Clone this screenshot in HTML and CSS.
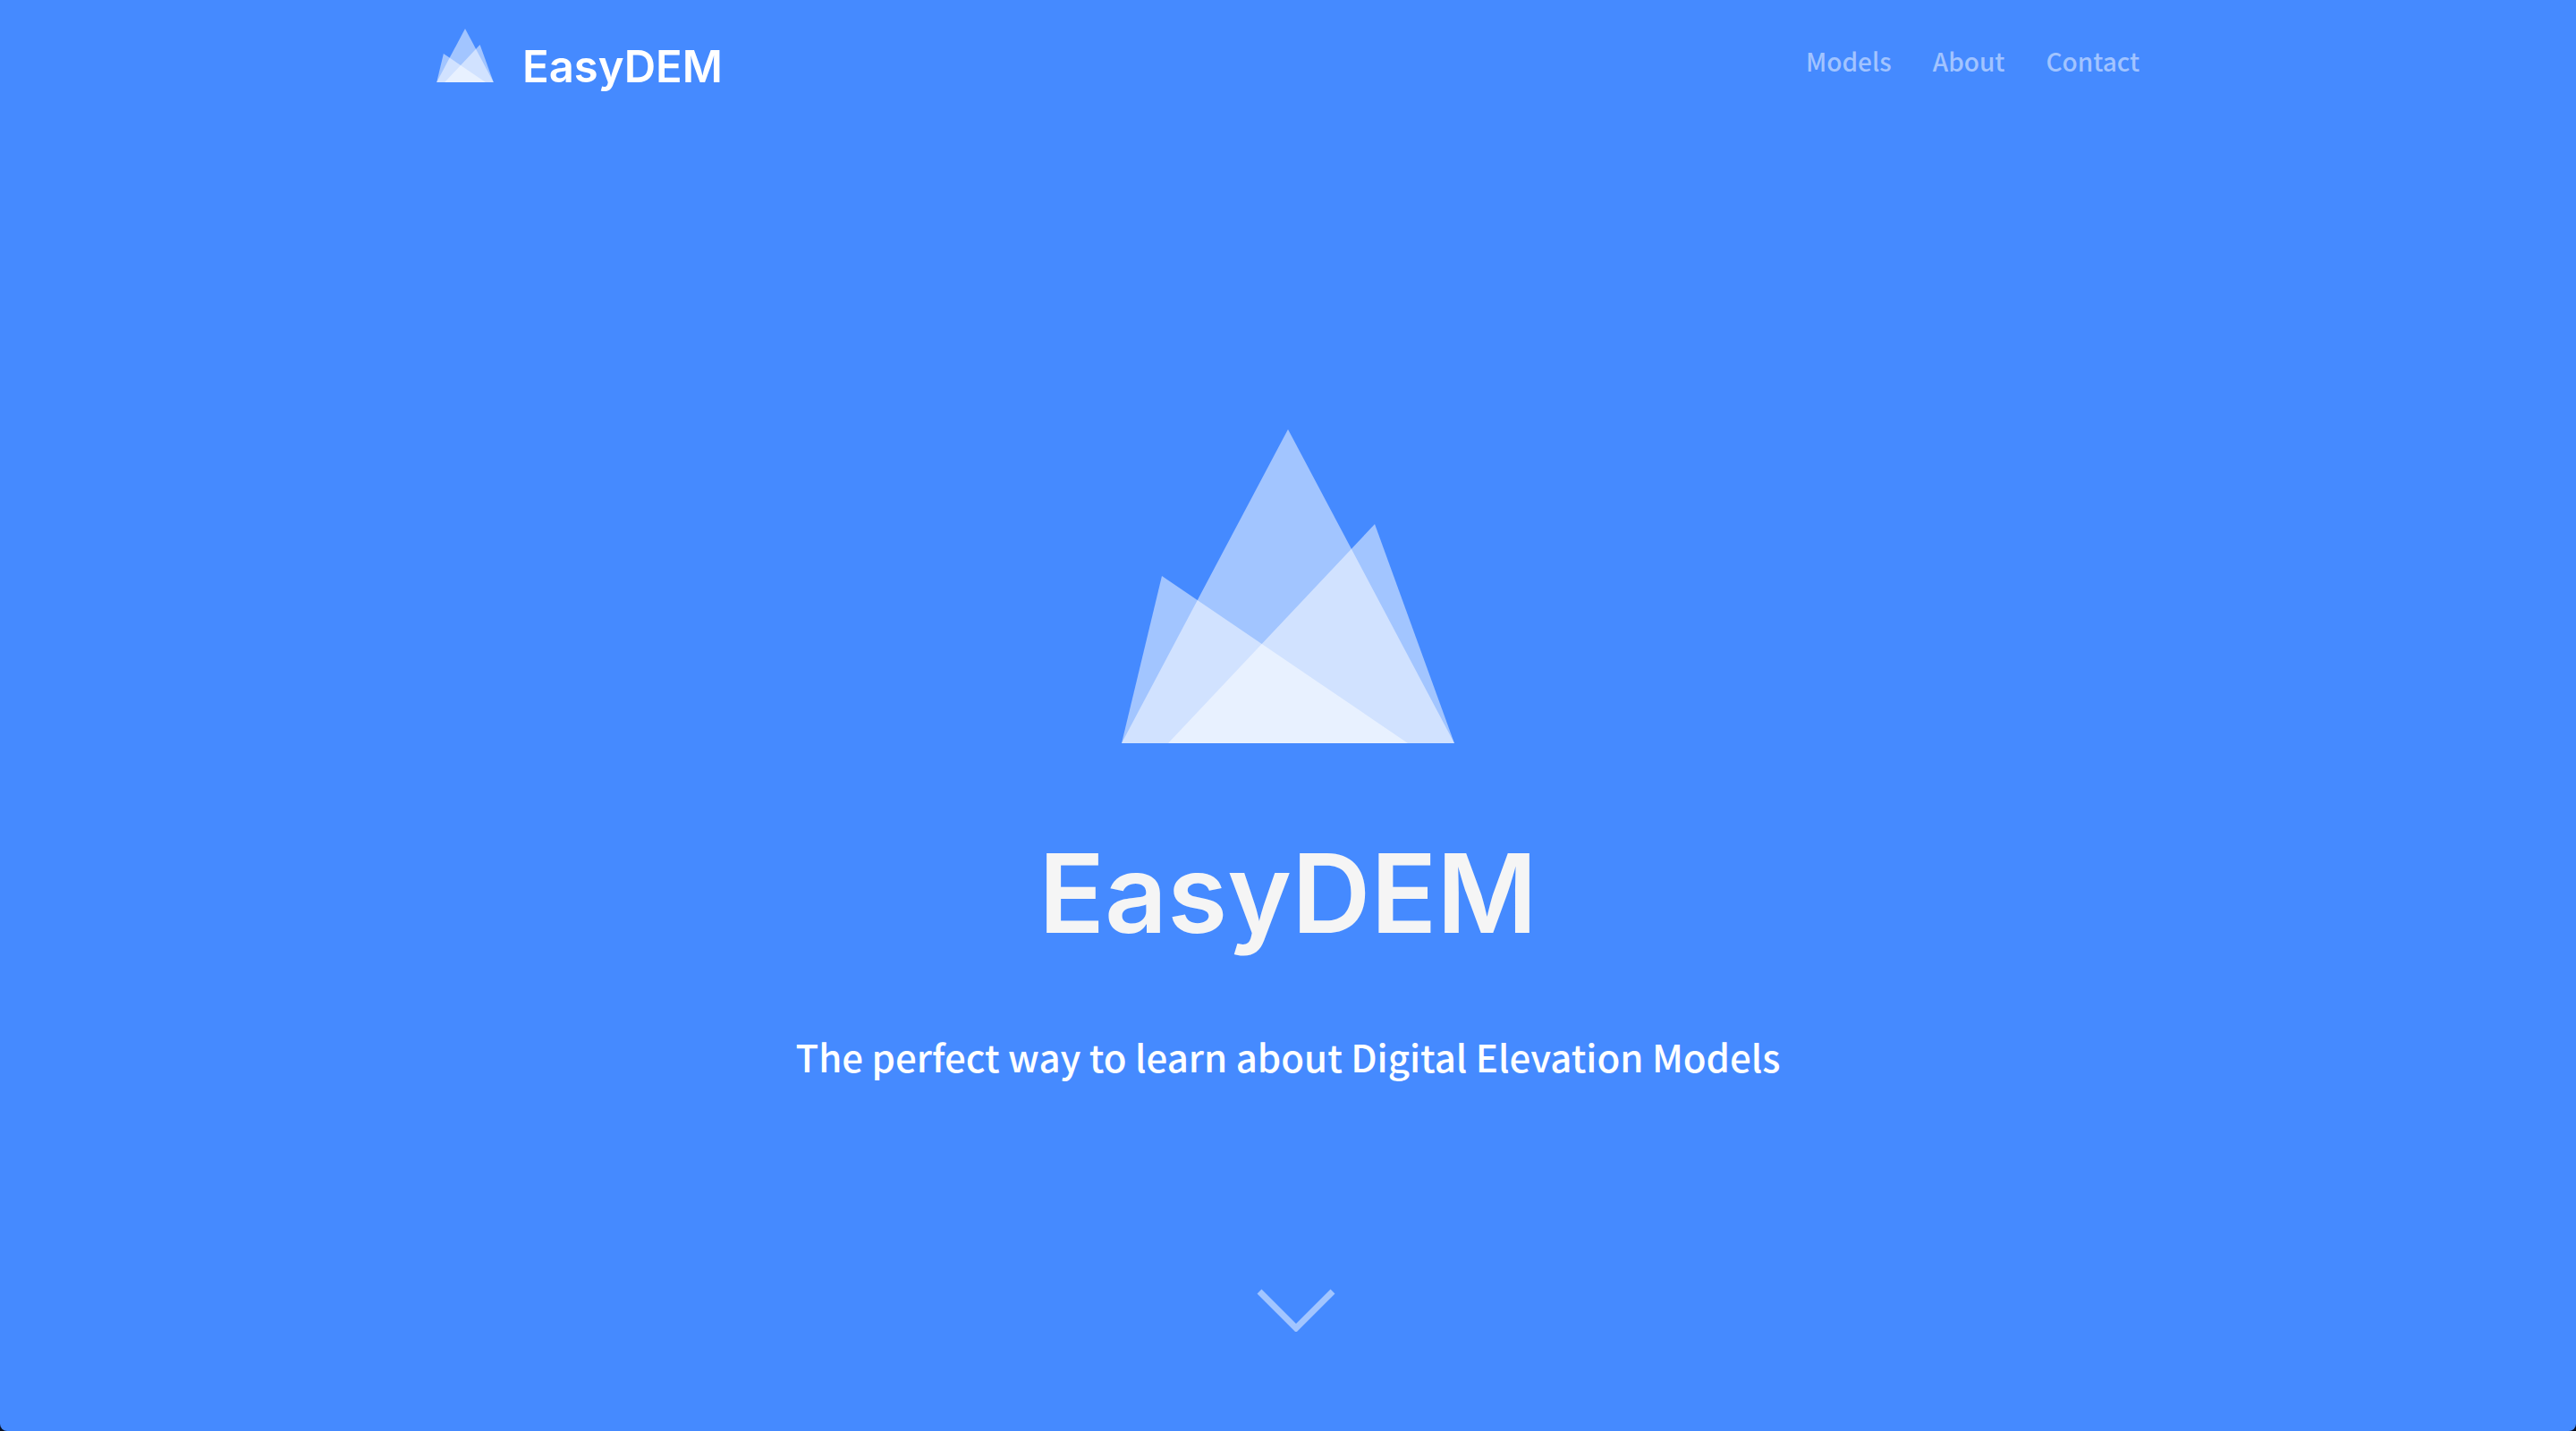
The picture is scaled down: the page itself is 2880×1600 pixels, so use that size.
FILE: index.html
```html
<!DOCTYPE html>
<html lang="en">
<head>
<meta charset="utf-8">
<meta name="viewport" content="width=device-width, initial-scale=1">
<title>EasyDEM</title>
<link rel="stylesheet" href="styles.css">
</head>
<body>
<div class="page">
  <header class="navbar">
    <a class="brand" href="#top">
      <svg class="brand-logo" viewBox="0 0 372 351" aria-hidden="true">
        <path d="M0 351 186 0 372 351Z"/>
        <path d="M0 351 45 164 320 351Z"/>
        <path d="M52 351 283 106 372 351Z"/>
      </svg>
      <span class="brand-name">EasyDEM</span>
    </a>
    <nav class="nav-links">
      <a href="#models">Models</a>
      <a href="#about">About</a>
      <a href="#contact">Contact</a>
    </nav>
  </header>
  <main class="hero" id="top">
    <svg class="hero-logo" viewBox="0 0 372 351" aria-hidden="true">
      <path d="M0 351 186 0 372 351Z"/>
      <path d="M0 351 45 164 320 351Z"/>
      <path d="M52 351 283 106 372 351Z"/>
    </svg>
    <h1 class="hero-title">EasyDEM</h1>
    <p class="hero-tagline">The perfect way to learn about Digital Elevation Models</p>
    <a class="scroll-down" href="#models" aria-label="Scroll to models">
      <svg class="chevron" viewBox="0 0 90 48" aria-hidden="true">
        <path d="M4 3 45 44 86 3"/>
      </svg>
    </a>
  </main>
</div>
</body>
</html>
```
FILE: styles.css
```css
* {
  box-sizing: border-box;
}

body {
  margin: 0;
  background: #0a1020;
  font-family: "Noto Sans CJK SC", "Noto Sans", sans-serif;
  font-weight: 500;
}

a {
  color: inherit;
  text-decoration: none;
}

.page {
  display: flex;
  flex-direction: column;
  min-height: 100vh;
  background: #458aff;
  border-radius: 0 0 8px 8px;
  color: #fff;
}

.navbar {
  display: flex;
  justify-content: space-between;
  align-items: flex-start;
  width: 100%;
  max-width: 2000px;
  margin: 0 auto;
  padding: 32px 48px 0;
}

.brand {
  display: flex;
  gap: 32px;
}

.brand-logo {
  width: 64px;
  height: 60px;
  fill: rgba(255, 255, 255, 0.5);
}

.brand-name {
  padding-top: 12px;
  font-family: Inter, sans-serif;
  font-size: 49px;
  font-weight: 600;
  line-height: 62px;
}

.nav-links {
  display: flex;
  gap: 46px;
  padding-top: 14px;
  font-size: 28px;
  line-height: 44px;
  color: rgba(255, 255, 255, 0.5);
}

.hero {
  display: flex;
  flex-direction: column;
  align-items: center;
  padding: 374px 24px 0;
  text-align: center;
}

.hero-logo {
  width: 372px;
  height: 351px;
  fill: rgba(255, 255, 255, 0.5);
}

.hero-title {
  margin: 96px 0 0;
  font-family: Inter, sans-serif;
  font-size: 122px;
  font-weight: 600;
  line-height: 144px;
  color: #f5f5f5;
}

.hero-tagline {
  margin: 78px 0 0;
  font-size: 42px;
  line-height: 64px;
}

.scroll-down {
  margin: 228px 0 0 18px;
}

.chevron {
  display: block;
  width: 90px;
  height: 48px;
  fill: none;
  stroke: rgba(255, 255, 255, 0.5);
  stroke-width: 7px;
}
```
